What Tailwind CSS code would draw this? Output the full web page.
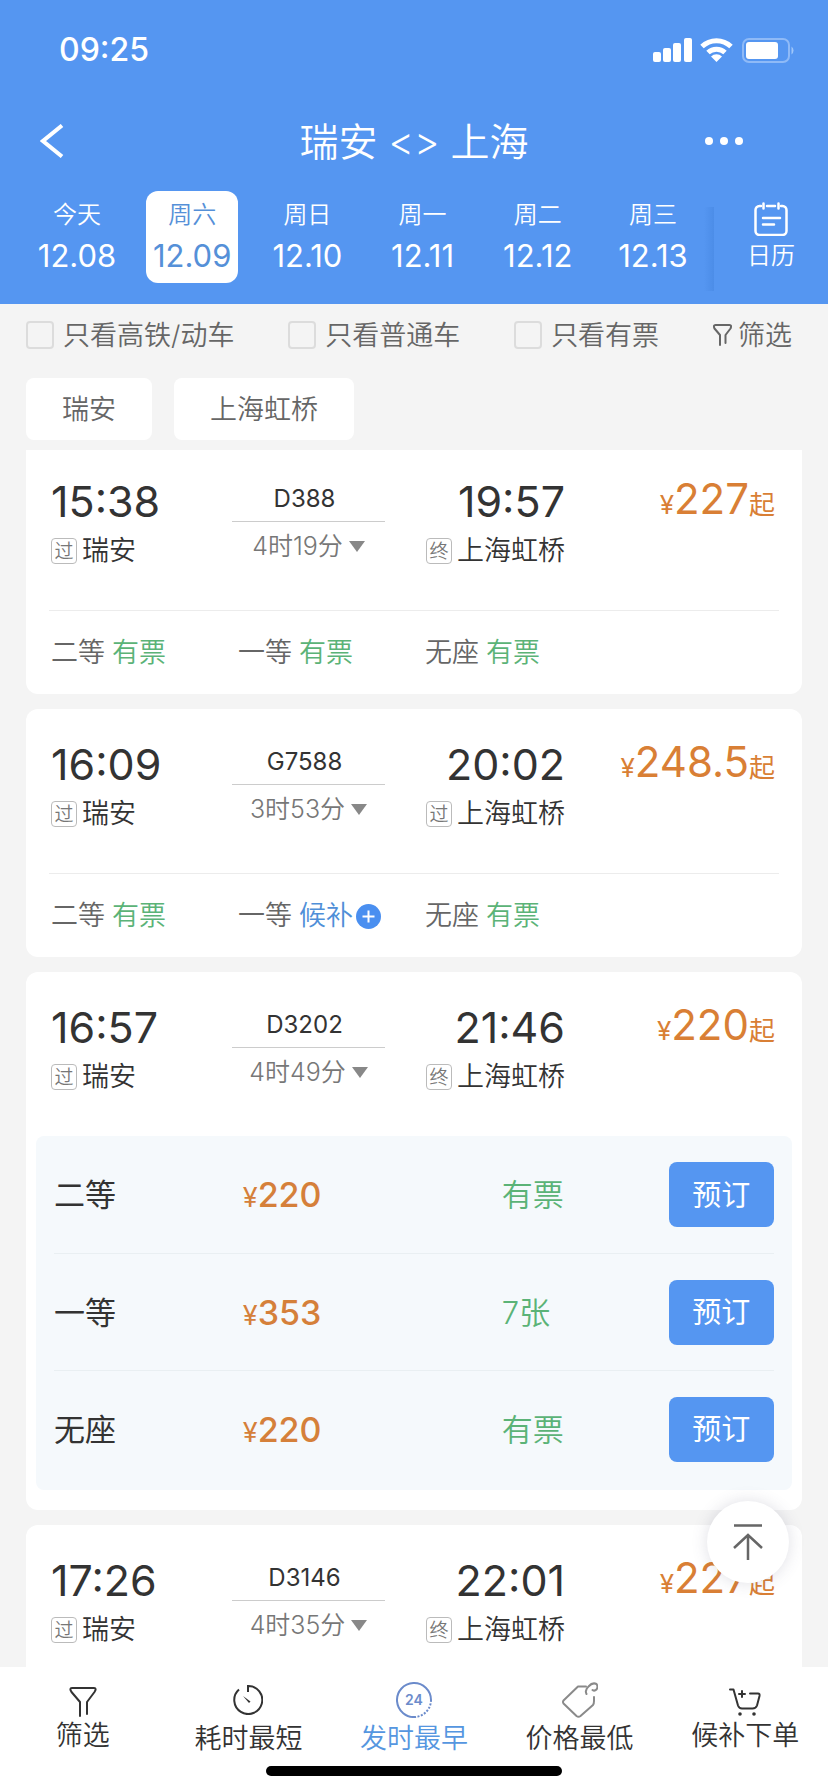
<!DOCTYPE html>
<html lang="zh-CN">
<head>
  <meta charset="UTF-8" />
  <meta name="viewport" content="width=device-width, initial-scale=1.0" />
  <title>瑞安 - 上海 车票查询</title>
  <script src="https://cdn.jsdelivr.net/npm/@tailwindcss/browser@4"></script>
</head>
<body class="bg-[#f4f4f4] font-['Inter','Noto_Sans_CJK_SC',sans-serif] text-[#333]">
<div class="relative flex h-screen flex-col overflow-hidden">

  <header class="shrink-0 bg-[#5596f1] text-white">
    <!-- 状态栏 -->
    <div class="flex h-[100px] items-center justify-between pl-[59px] pr-8">
      <span class="text-[32px] font-medium">09:25</span>
      <div class="flex items-center gap-2">
        <svg class="h-6 w-[39px]" viewBox="0 0 39 24" fill="currentColor">
          <rect x="0" y="14" width="8" height="10" rx="2" />
          <rect x="10" y="10" width="8" height="14" rx="2" />
          <rect x="20" y="5" width="8" height="19" rx="2" />
          <rect x="31" y="0" width="8" height="24" rx="2" />
        </svg>
        <svg class="h-6 w-[33px]" viewBox="0 0 33 24" fill="none" stroke="currentColor" stroke-width="5">
          <path d="M2 8.500a21 21 0 0 1 29 0" />
          <path d="M8 14.500a12.500 12.500 0 0 1 17 0" />
          <path d="M11 18.500a8 8 0 0 1 11 0L16.500 24Z" fill="currentColor" stroke="none" />
        </svg>
        <svg class="ml-px h-[25px] w-[54px]" viewBox="0 0 54 25">
          <rect x="1" y="1" width="46" height="23" rx="6" fill="none" stroke="#8fbaf7" stroke-width="2" />
          <rect x="4" y="4" width="32" height="17" rx="3" fill="#fff" />
          <path d="M49.500 8.500a5 5 0 0 1 0 8Z" fill="#9fc6f9" />
        </svg>
      </div>
    </div>

    <!-- 标题 -->
    <div class="grid h-[82px] grid-cols-[1fr_auto_1fr] items-center px-10">
      <button type="button" aria-label="返回" class="justify-self-start">
        <svg class="h-[34px] w-6" viewBox="0 0 24 34" fill="none" stroke="currentColor" stroke-width="4"><path d="M22 1.500 3 17l19 15.500" /></svg>
      </button>
      <h1 class="text-[39px] font-[350] leading-none">瑞安 &lt;&gt; 上海</h1>
      <button type="button" aria-label="更多" class="mr-[45px] justify-self-end">
        <svg class="h-2 w-[38px]" viewBox="0 0 38 8" fill="currentColor"><circle cx="4" cy="4" r="4" /><circle cx="19" cy="4" r="4" /><circle cx="34" cy="4" r="4" /></svg>
      </button>
    </div>

    <!-- 日期 -->
    <div class="flex pt-[9px]">
      <div id="dates" class="flex flex-1 justify-between pb-[21px] pl-[31px] pr-[5px]"></div>
      <div class="mt-4 h-[84px] w-[10px] bg-linear-to-r from-[#5596f1] to-[#4c8de8]"></div>
      <button type="button" class="flex w-[114px] flex-col items-center pt-[11px]">
        <svg class="h-[34px] w-[34px]" viewBox="0 0 34 34" fill="none" stroke="currentColor" stroke-width="2.500" stroke-linecap="round">
          <path d="M7 4H5.500A4 4 0 0 0 1.500 8v21a4 4 0 0 0 4 4h23a4 4 0 0 0 4-4V8a4 4 0 0 0-4-4H27M13 4h8" />
          <path d="M9.500 1.500v5M24.500 1.500v5M9 16h17M9 22.500h11" />
        </svg>
        <span class="mt-1 text-2xl font-[350] leading-8">日历</span>
      </button>
    </div>
  </header>

  <!-- 筛选条件 -->
  <form class="flex h-[62px] shrink-0 items-center justify-between pl-[26px] pr-9 text-[27px] font-[350] text-[#666]">
    <label class="flex items-center gap-[9px]"><input type="checkbox" class="size-7 appearance-none rounded-sm border-2 border-[#dcdcdc]" /><span class="pt-[2px]">只看高铁/动车</span></label>
    <label class="flex items-center gap-[9px]"><input type="checkbox" class="size-7 appearance-none rounded-sm border-2 border-[#dcdcdc]" /><span class="pt-[2px]">只看普通车</span></label>
    <label class="flex items-center gap-[9px]"><input type="checkbox" class="size-7 appearance-none rounded-sm border-2 border-[#dcdcdc]" /><span class="pt-[2px]">只看有票</span></label>
    <button type="button" class="flex items-center gap-[6px]">
      <svg class="h-[22px] w-[19px]" viewBox="0 0 19 22" fill="none" stroke="currentColor" stroke-width="2" stroke-linejoin="round" stroke-linecap="round"><path d="M7 21V11L1.500 4.500Q0 1 2.500 1h14Q19 1 17.500 4.500L12.500 11v8" /></svg>
      <span class="pt-[2px]">筛选</span>
    </button>
  </form>

  <div class="mb-[10px] mt-3 flex shrink-0 gap-[22px] px-[26px] text-[27px] font-[350] text-[#666]">
    <button type="button" class="h-[62px] rounded-lg bg-white px-9 pt-[2px]">瑞安</button>
    <button type="button" class="h-[62px] rounded-lg bg-white px-9 pt-[2px]">上海虹桥</button>
  </div>

  <!-- 车次列表 -->
  <main id="trains" class="min-h-0 flex-1 space-y-[15px] overflow-hidden px-[26px]"></main>

  <button type="button" aria-label="回到顶部" class="absolute bottom-[209px] right-[39px] flex size-[82px] items-center justify-center rounded-full bg-white shadow-[0_0_16px_rgba(80,80,110,0.18)]">
    <svg class="h-9 w-[30px]" viewBox="0 0 30 36" fill="none" stroke="#666" stroke-width="2.500"><path d="M1 1.500h28M15 36V11M1 24 15 11l14 13" /></svg>
  </button>

  <!-- 底部导航 -->
  <nav class="shrink-0 bg-white">
    <div class="grid h-[99px] grid-cols-5 pt-[14px] text-[27px] font-[350]">
      <button type="button" class="flex flex-col items-center">
        <span class="flex h-[38px] items-center pt-1"><svg class="h-[30px] w-7" viewBox="0 0 28 30" fill="none" stroke="currentColor" stroke-width="2" stroke-linecap="round" stroke-linejoin="round"><path d="M11 29V15L2.500 5Q0 1 3 1h22q3 0 .5 4L18 15v12" /></svg></span>
        <span class="leading-[34px]">筛选</span>
      </button>
      <button type="button" class="flex flex-col items-center">
        <span class="flex h-[38px] items-center"><svg class="h-[30px] w-[30px]" viewBox="0 0 30 30" fill="none" stroke="currentColor" stroke-width="2"><path d="M15 7V1A14 14 0 1 1 6 4.500" /><path d="M10 11l7.500 5.500-1.500 1.500Z" fill="currentColor" stroke="none" /></svg></span>
        <span class="leading-10">耗时最短</span>
      </button>
      <button type="button" class="flex flex-col items-center text-[#5596e0]">
        <span class="flex h-[38px] items-center"><svg class="h-9 w-9" viewBox="0 0 36 36" fill="none" stroke="#6b8bcb" stroke-width="2">
          <path d="M20 34.900A17 17 0 1 1 35 18" /><path d="M35 18A17 17 0 0 1 20 34.900" stroke-dasharray="2 1.500" />
          <text x="18" y="23" text-anchor="middle" font-size="14" font-weight="600" fill="#6b8bcb" stroke="none">24</text>
        </svg></span>
        <span class="leading-10">发时最早</span>
      </button>
      <button type="button" class="flex flex-col items-center">
        <span class="flex h-[38px] items-center"><svg class="h-9 w-9" viewBox="0 0 36 36" fill="none" stroke="#8a8a8a" stroke-width="2" stroke-linejoin="round" stroke-linecap="round"><path d="M24 4.500H16L1.500 18.500q-1 1.500 0 3l13 12.500q2 1.500 4 0L31 23q1-1.500 1-4v-4" /><path d="M24.500 12q-2-4 2-7.500 4-4.500 8-2.500 2 3 0 5.500-2 2-4 .5" /></svg></span>
        <span class="leading-10">价格最低</span>
      </button>
      <button type="button" class="flex flex-col items-center">
        <span class="flex h-[38px] items-center pt-1"><svg class="h-7 w-8" viewBox="0 0 32 28" fill="none" stroke="currentColor" stroke-width="2" stroke-linecap="round" stroke-linejoin="round"><path d="M1 1.500h3.500L9 17.500q1 3 4 3h10.500q3.500 0 4.500-3L30.500 8q.5-2.500-1.500-2.500h-8M10 6h6M13 3v6" /><circle cx="11" cy="26" r="1.800" fill="currentColor" stroke="none" /><circle cx="25" cy="26" r="1.800" fill="currentColor" stroke="none" /></svg></span>
        <span class="leading-[34px]">候补下单</span>
      </button>
    </div>
    <div class="mx-auto mb-4 h-[10px] w-[296px] rounded-full bg-black"></div>
  </nav>
</div>

<script>
  const dates = [
    ["今天", "12.08"], ["周六", "12.09"], ["周日", "12.10"],
    ["周一", "12.11"], ["周二", "12.12"], ["周三", "12.13"],
  ];

  const trains = [
    { no: "D388", dep: "15:38", arr: "19:57", time: "4时19分", end: "终", price: "227",
      seats: [["二等", "有票"], ["一等", "有票"], ["无座", "有票"]] },
    { no: "G7588", dep: "16:09", arr: "20:02", time: "3时53分", end: "过", price: "248.5",
      seats: [["二等", "有票"], ["一等", "候补"], ["无座", "有票"]] },
    { no: "D3202", dep: "16:57", arr: "21:46", time: "4时49分", end: "终", price: "220", open: true,
      seats: [["二等", "有票", "220"], ["一等", "7张", "353"], ["无座", "有票", "220"]] },
    { no: "D3146", dep: "17:26", arr: "22:01", time: "4时35分", end: "终", price: "227",
      seats: [] },
  ];

  document.getElementById("dates").innerHTML = dates.map(([day, date], i) => `
    <button type="button" class="flex h-[92px] w-[92px] flex-col items-center rounded-xl pt-2 ${i === 1 ? "bg-white text-[#5590d8]" : ""}">
      <span class="text-2xl font-[350] leading-8">${day}</span>
      <span class="mt-[9px] text-[31px] leading-8">${date}</span>
    </button>`).join("");

  function station(tag, name) {
    return `<div class="mt-[4px] flex h-10 items-center gap-[5px] text-[27px] font-[350]">
      <span class="flex size-[26px] items-center justify-center rounded-sm border border-[#bbb] text-[19px] leading-none text-[#777]">${tag}</span>${name}
    </div>`;
  }

  function seatRow(seats) {
    return `<div class="mx-[23px] mt-[39px] flex h-[84px] items-center border-t border-[#ececec] pl-[2px] pt-[2px] text-[27px] font-[350]">
      ${seats.map(([name, left]) => `
        <div class="flex w-[187px] items-center gap-[7px] text-[#666]">${name}
          ${left === "候补"
            ? `<span class="flex items-center gap-[3px] text-[#4f8fd8]">候补<svg class="size-[25px]" viewBox="0 0 25 25"><circle cx="12.500" cy="12.500" r="12.500" fill="#4a8ff0" /><path d="M6.500 12.500h12M12.500 6.500v12" stroke="#fff" stroke-width="2" /></svg></span>`
            : `<span class="text-[#5bb377]">${left}</span>`}
        </div>`).join("")}
    </div>`;
  }

  function seatTable(seats) {
    return `<div class="mx-[10px] mb-5 mt-[39px] rounded-lg bg-[#f5f9fc] px-[18px] pb-[3px]">
      ${seats.map(([name, left, price], i) => `
        <div class="grid h-[117px] grid-cols-[188fr_258fr_166fr_105fr] items-center ${i ? "border-t border-[#e9eff2]" : ""}">
          <span class="pt-[2px] text-[31px]">${name}</span>
          <span class="text-[#d5803a]"><span class="text-[27px]">¥</span><span class="text-[34px] font-medium">${price}</span></span>
          <span class="pt-[2px] text-[31px] font-[350] text-[#5bb377]">${left}</span>
          <button type="button" class="h-[65px] rounded-lg bg-[#5596f1] pt-[2px] text-[29px] text-white">预订</button>
        </div>`).join("")}
    </div>`;
  }

  document.getElementById("trains").innerHTML = trains.map((t, i) => `
    <section class="flow-root bg-white ${i === 0 ? "rounded-b-xl pt-[25px]" : "rounded-xl pt-[29px]"}">
      <div class="grid grid-cols-[181fr_153fr_180fr_210fr] pl-[25px] pr-[27px]">
        <div>
          <div class="text-[43px] leading-[52px]">${t.dep}</div>
          ${station("过", "瑞安")}
        </div>
        <div class="pt-2 text-center">
          <div class="pr-2 text-2xl leading-8">${t.no}</div>
          <div class="mb-2 mt-[6px] h-px bg-[#ccc]"></div>
          <div class="flex items-center justify-center gap-[6px] text-[25px] font-[350] leading-8 text-[#777]">${t.time}
            <svg class="h-[11px] w-4" viewBox="0 0 16 11" fill="#888"><path d="M0 0h16L8 11Z" /></svg>
          </div>
        </div>
        <div class="flex flex-col items-end">
          <div class="text-[43px] leading-[52px]">${t.arr}</div>
          ${station(t.end, "上海虹桥")}
        </div>
        <div class="whitespace-nowrap text-right leading-[48px] text-[#d97f35]">
          <span class="text-[26px]">¥</span><span class="text-[42px]">${t.price}</span><span class="text-[26px]">起</span>
        </div>
      </div>
      ${t.open ? seatTable(t.seats) : seatRow(t.seats)}
    </section>`).join("");
</script>
</body>
</html>
